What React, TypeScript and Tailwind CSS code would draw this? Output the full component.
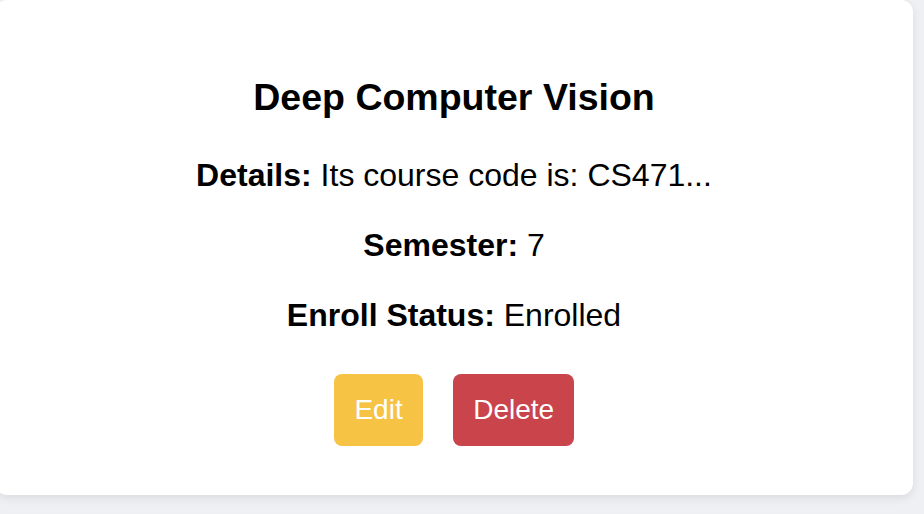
import React from "react";

export default function App() {
  return (
    <div className="min-h-screen w-full overflow-hidden bg-[#eff0f4] font-['Liberation_Sans',Arial,sans-serif] text-black">
      <div className="ml-[-5px] flex h-[495px] w-[918px] flex-col items-center rounded-xl bg-white pt-[76px] shadow-[0_3px_10px_rgba(0,0,0,0.09)]">
        <h3 className="mb-[38px] text-[37.5px] font-bold leading-[43px]">Deep Computer Vision</h3>
        <p className="mb-[33px] text-[32px] leading-[37px]">
          <strong className="font-bold">Details:</strong> Its course code is: CS471...
        </p>
        <p className="mb-[33px] text-[32px] leading-[37px]">
          <strong className="font-bold">Semester:</strong> 7
        </p>
        <p className="text-[32px] leading-[37px]">
          <strong className="font-bold">Enroll Status:</strong> Enrolled
        </p>
        <div className="mt-[40px] flex gap-[30px]">
          <button className="flex h-[72px] items-center rounded-lg bg-[#f6c344] px-[20.5px] text-[28px] leading-[32px] text-white">
            Edit
          </button>
          <button className="flex h-[72px] items-center rounded-lg bg-[#ca444b] px-[20px] text-[28px] leading-[32px] text-white">
            Delete
          </button>
        </div>
      </div>
    </div>
  );
}
